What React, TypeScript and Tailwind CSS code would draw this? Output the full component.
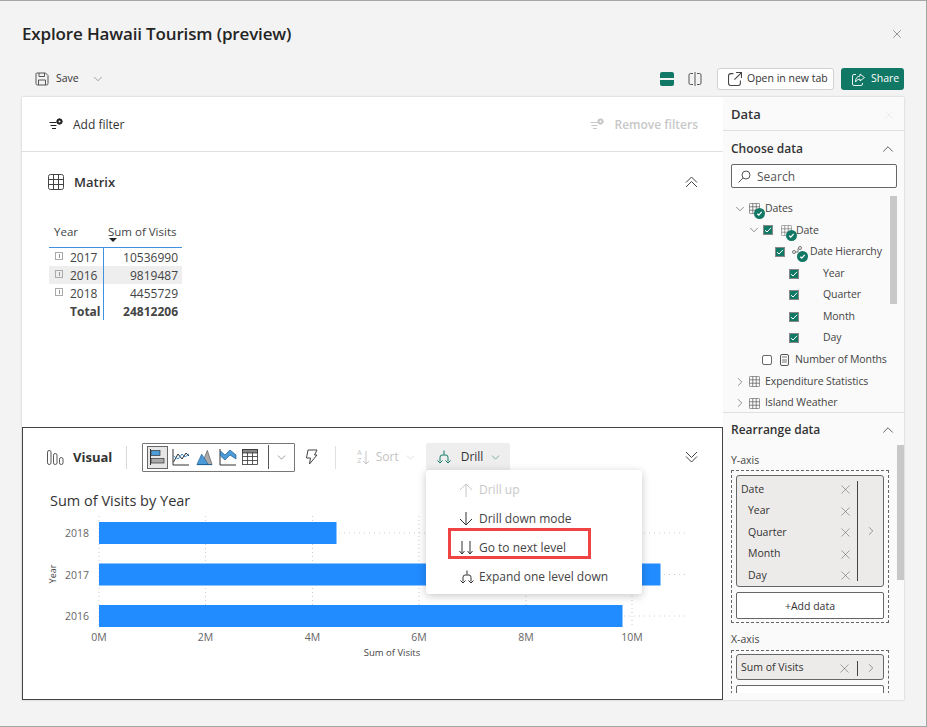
import { ChevronDown, ChevronRight, ChevronUp, X } from "lucide-react";

const FONT = "font-['Open_Sans','Noto_Sans',sans-serif]";

const DrillIcon = ({ color = "#333" }: { color?: string }) => (
  <svg width="16" height="16" viewBox="0 0 16 16" fill="none" stroke={color} strokeWidth="1">
    <path d="M8 1.5v4M4 12.5V8.5q0-2.5 2-2.5h4q2 0 2 2.5v4" />
    <path d="M1.5 11.5 4 14l2.5-2.5M9.5 11.5 12 14l2.5-2.5" />
  </svg>
);

const Arrow = ({ up, color }: { up?: boolean; color: string }) => (
  <svg width="14" height="16" viewBox="0 0 14 16" fill="none" stroke={color} strokeWidth="1">
    {up ? <path d="M7 15V2M1 8l6-6 6 6" /> : <path d="M7 1v13M1 8l6 6 6-6" />}
  </svg>
);

const DoubleArrow = () => (
  <svg width="14" height="16" viewBox="0 0 14 16" fill="none" stroke="#333" strokeWidth="1">
    <path d="M3 1v13M0.5 11 3 14l2.5-3M11 1v13M8.5 11 11 14l2.5-3" />
  </svg>
);

const GridIcon = ({ size = 14, color = "#444" }: { size?: number; color?: string }) => (
  <svg width={size} height={size} viewBox="0 0 16 16" fill="none" stroke={color} strokeWidth="1">
    <rect x="0.5" y="0.5" width="15" height="15" rx="2" />
    <path d="M5.5 0.5v15M10.5 0.5v15M0.5 5.5h15M0.5 10.5h15" />
  </svg>
);

const DoubleChevron = ({ up }: { up?: boolean }) => (
  <svg width="13" height="12" viewBox="0 0 13 12" fill="none" stroke="#444" strokeWidth="1">
    {up ? <path d="M1 6.500 6.500 1 12 6.500M1 11 6.500 5.500 12 11" /> : <path d="M1 1l5.500 5.500L12 1M1 5.500 6.500 11 12 5.500" />}
  </svg>
);

const FilterIcon = ({ color, hole }: { color: string; hole: string }) => (
  <svg width="15" height="13" viewBox="0 0 15 13" fill="none" stroke={color}>
    <path d="M0.500 4.500h7M1.500 7.500h6M3 10.500h4" />
    <circle cx="10.500" cy="3.500" r="2.700" fill={color} />
    <circle cx="10.500" cy="3.500" r="1" fill={hole} stroke="none" />
  </svg>
);

const CheckBadge = () => (
  <span className="absolute -bottom-[5px] -right-[5px] flex h-[11px] w-[11px] items-center justify-center rounded-full bg-[#117865]">
    <svg width="7" height="7" viewBox="0 0 8 8" fill="none" stroke="#fff" strokeWidth="1.5">
      <path d="M1.5 4.2 3.2 5.8 6.5 2.2" />
    </svg>
  </span>
);

const Check = ({ on = true }: { on?: boolean }) =>
  on ? (
    <span className="flex h-[10px] w-[10px] shrink-0 items-center justify-center border border-[#888] bg-[#117865]">
      <svg width="8" height="8" viewBox="0 0 8 8" fill="none" stroke="#fff" strokeWidth="1">
        <path d="M1 4.2 3 6l4-4.2" />
      </svg>
    </span>
  ) : (
    <span className="h-[10px] w-[10px] shrink-0 rounded-[2px] border border-[#666] bg-white" />
  );

const TreeRow = ({ indent, children }: { indent: string; children: React.ReactNode }) => (
  <div className={`flex h-[21.6px] items-center whitespace-nowrap text-[10.5px] tracking-[-0.1px] text-[#444] ${indent}`}>{children}</div>
);

const LevelRow = ({ label }: { label: string }) => (
  <TreeRow indent="pl-[58px]">
    <Check />
    <span className="ml-6">{label}</span>
  </TreeRow>
);

const FieldRow = ({ label, sub }: { label: string; sub?: boolean }) => (
  <div className="flex h-[21.5px] items-center justify-between text-[10.5px] text-[#333]">
    <span className={sub ? "pl-[7px]" : ""}>{label}</span>
    <X size={15} strokeWidth={0.8} color="#555" />
  </div>
);

const TypeIcons = () => (
  <>
    <span className="flex h-[23px] w-[21px] items-center justify-center border border-[#666] bg-[#e6e6e6]">
      <svg width="18" height="18" viewBox="0 0 18 18">
        <path d="M1.5 1v16" stroke="#333" />
        <rect x="2" y="2.5" width="9" height="5" fill="#4a9bd8" stroke="#333" strokeWidth="0.7" />
        <rect x="2" y="10.5" width="13" height="4.5" fill="#aaa" stroke="#333" strokeWidth="0.7" />
      </svg>
    </span>
    <svg className="ml-[4px]" width="18" height="18" viewBox="0 0 18 18" fill="none">
      <path d="M1 1v16h16" stroke="#333" />
      <path d="M1.5 14 6 6l4 5 4-6 3 3" stroke="#333" />
      <path d="M1.5 8 6 11l4-5 3 3 4-3" stroke="#3f8fd0" />
    </svg>
    <svg className="ml-[6px]" width="17" height="18" viewBox="0 0 18 18" fill="none">
      <path d="M6 17 12 2l5 15z" fill="#aaa" stroke="#555" strokeWidth="0.7" />
      <path d="M1 17 6 6l7 11z" fill="#4a9bd8" stroke="#1f5f93" strokeWidth="0.7" />
      <path d="M1 17h16" stroke="#1f5f93" />
    </svg>
    <svg className="ml-[6px]" width="18" height="18" viewBox="0 0 18 18" fill="none">
      <path d="M1 1v16h16" stroke="#333" />
      <path d="M1.5 3 6 7l5-5 6 5v4l-6-4-5 5-4.500-4z" fill="#4a9bd8" stroke="#1f5f93" strokeWidth="0.7" />
    </svg>
    <svg className="ml-[5px]" width="16" height="16" viewBox="0 0 16 16" fill="none" stroke="#333" strokeWidth="0.8">
      <rect x="0.5" y="0.5" width="15" height="15" />
      <rect x="0.5" y="0.5" width="15" height="3.500" fill="#888" />
      <path d="M5.500 3.500v12M10.500 3.500v12M0.500 7.500h15M0.500 11.500h15" />
    </svg>
  </>
);

const Chart = () => {
  const ticks = [
    { label: "0M", x: 99 },
    { label: "2M", x: 205.5 },
    { label: "4M", x: 312.5 },
    { label: "6M", x: 419 },
    { label: "8M", x: 526 },
    { label: "10M", x: 632 },
  ];
  const bars = [
    { year: "2018", y: 522, w: 237.5 },
    { year: "2017", y: 563.500, w: 561.5 },
    { year: "2016", y: 605, w: 523.5 },
  ];
  return (
    <svg width="699" height="150" viewBox="23 510 699 150" className="block" fontFamily="'Open Sans', sans-serif">
      {ticks.map((t) => (
        <g key={t.label}>
          <path d={`M${t.x} 516V627`} stroke="#ccc" strokeDasharray="1 3" />
          <text x={t.x} y={641} fontSize="10.500" fill="#666" textAnchor="middle">
            {t.label}
          </text>
        </g>
      ))}
      {bars.map((b) => (
        <g key={b.year}>
          <path d={`M99 ${b.y + 11}H685`} stroke="#ccc" strokeDasharray="1 4" />
          <rect x={99} y={b.y} width={b.w} height={22} fill="#218cff" />
          <text x={89} y={b.y + 15} fontSize="10.500" fill="#666" textAnchor="end">
            {b.year}
          </text>
        </g>
      ))}
      <text x={392} y={656} fontSize="9.500" fill="#444" textAnchor="middle">
        Sum of Visits
      </text>
      <text transform="translate(56 574) rotate(-90)" fontSize="9" fill="#444" textAnchor="middle">
        Year
      </text>
    </svg>
  );
};

const MatrixRow = ({ year, value, hl }: { year: string; value: string; hl?: boolean }) => (
  <div className={`flex h-[18px] items-center pt-[2px] text-[12px] text-[#444] ${hl ? "bg-[#eeeeee]" : ""}`}>
    <span className="flex w-[54px] items-center pl-[6px]">
      <span className="mr-[7px] -mt-[5px] flex h-[8px] w-[8px] items-center justify-center border border-[#aaa]">
        <span className="h-[4px] w-px bg-[#999]" />
      </span>
      {year}
    </span>
    <span className="flex-1 pr-[4px] text-right">{value}</span>
  </div>
);

export default function App() {
  return (
    <div className={`${FONT} h-[727px] w-[927px] overflow-hidden border border-l-0 border-[#a6a6a6] bg-[#f3f3f3] text-[#242424]`}>
      <div className="flex h-[60px] items-center justify-between pl-[22px] pr-[22px] pt-[6px]">
        <h1 className="text-[17px] font-semibold tracking-[-0.15px]">Explore Hawaii Tourism (preview)</h1>
        <X size={14} strokeWidth={1} color="#555" />
      </div>

      <div className="flex h-[36px] items-center justify-between pl-[35px] pr-[22px]">
        <div className="flex items-center text-[10.500px] text-[#333]">
          <svg width="14" height="14" viewBox="0 0 14 14" fill="none" stroke="#555">
            <path d="M1.500 1h9l2.500 2.500v8a1.500 1.500 0 0 1-1.500 1.500h-9A1.500 1.500 0 0 1 1 11.500V1.500zM4 1v3.500h5.500V1M3.500 13V8h7v5" />
          </svg>
          <span className="ml-[7px]">Save</span>
          <ChevronDown size={14} strokeWidth={1} color="#666" className="ml-[12px]" />
        </div>
        <div className="flex items-center">
          <svg width="14" height="14" viewBox="0 0 14 14">
            <path d="M2 0h10a2 2 0 0 1 2 2v4H0V2a2 2 0 0 1 2-2zM0 8h14v4a2 2 0 0 1-2 2H2a2 2 0 0 1-2-2z" fill="#117865" />
          </svg>
          <svg className="ml-[14px]" width="14" height="14" viewBox="0 0 14 14" fill="none" stroke="#555">
            <path d="M7 0v14M5 1.500H2.500a1.500 1.500 0 0 0-1.500 1.500v8a1.500 1.500 0 0 0 1.500 1.500H5M9 1.500h2.500A1.500 1.500 0 0 1 13 3v8a1.500 1.500 0 0 1-1.500 1.500H9" />
          </svg>
          <button className="ml-[15px] flex h-[22px] w-[117px] items-center rounded-[3px] border border-[#d1d1d1] bg-white pl-[10px] text-[10.500px] text-[#333]">
            <svg width="14" height="14" viewBox="0 0 13 13" fill="none" stroke="#444">
              <path d="M5 1.500H2.500a2 2 0 0 0-2 2v7a2 2 0 0 0 2 2h7a2 2 0 0 0 2-2V8M7.500 0.500h5v5M12 1 6 7" />
            </svg>
            <span className="ml-[5px]">Open in new tab</span>
          </button>
          <button className="ml-[7px] flex h-[22px] w-[63px] items-center rounded-[3px] bg-[#117865] pl-[11px] text-[10.500px] text-white">
            <svg width="13" height="13" viewBox="0 0 13 13" fill="none" stroke="#fff" strokeWidth="0.9">
              <path d="M4 1.500H2a1.500 1.500 0 0 0-1.500 1.500v8A1.500 1.500 0 0 0 2 12.500h7a1.500 1.500 0 0 0 1.500-1.500v-1M8 1l4.500 3.500L8 8V6Q5 6 3.500 9 3.500 3.500 8 3z" />
            </svg>
            <span className="ml-[6px]">Share</span>
          </button>
        </div>
      </div>

      <div className="ml-[22px] flex h-[603px] w-[882px] shadow-[0_0_2px_rgba(0,0,0,0.2)]">
        <div className="flex w-[701px] flex-col bg-white">
          <div className="flex h-[55px] shrink-0 items-center justify-between border-b border-[#e0e0e0] pl-[27px] pr-[25px]">
            <div className="flex items-center text-[12px] text-[#333]">
              <FilterIcon color="#222" hole="#fff" />
              <span className="ml-[9px] mt-[2px]">Add filter</span>
            </div>
            <div className="flex items-center text-[12px] font-semibold text-[#c8c8c8]">
              <FilterIcon color="#c8c8c8" hole="#fff" />
              <span className="ml-[9px] mt-[2px]">Remove filters</span>
            </div>
          </div>

          <div className="h-[275px] shrink-0 pl-[26px] pr-[25px] pt-[21px]">
            <div className="flex h-[18px] items-center justify-between">
              <div className="flex items-center text-[13px] font-semibold text-[#333]">
                <GridIcon size={16} />
                <span className="ml-[10px] mt-[2px]">Matrix</span>
              </div>
              <DoubleChevron up />
            </div>
            <div className="ml-[1px] mt-[30px] w-[133px]">
              <div className="flex h-[27px] items-start border-b border-[#3f92e0] pt-[2px] text-[11.5px] text-[#444]">
                <span className="w-[55px] pl-[5px]">Year</span>
                <span className="relative flex-1 pl-[4px]">
                  Sum of Visits
                  <span className="absolute left-[5px] top-[15px] h-0 w-0 border-x-[4px] border-t-[4px] border-x-transparent border-t-[#222]" />
                </span>
              </div>
              <div className="relative">
                <MatrixRow year="2017" value="10536990" />
                <MatrixRow year="2016" value="9819487" hl />
                <MatrixRow year="2018" value="4455729" />
                <div className="flex h-[18px] items-center pt-[2px] text-[12px] font-bold text-[#444]">
                  <span className="w-[54px] pl-[21px]">Total</span>
                  <span className="flex-1 pr-[4px] text-right">24812206</span>
                </div>
                <div className="absolute bottom-0 left-[54px] top-0 w-px bg-[#3f92e0]" />
              </div>
            </div>
          </div>

          <div className="relative flex-1 border border-[#444]">
            <div className="flex h-[57px] items-center pl-[24px] pr-[24px] pt-[1px]">
              <svg width="17" height="15" viewBox="0 0 17 15" fill="none" stroke="#555">
                <rect x="0.500" y="0.500" width="3.500" height="14" rx="1.700" />
                <rect x="6.500" y="3.500" width="3.500" height="11" rx="1.700" />
                <rect x="12.500" y="7.500" width="3.500" height="7" rx="1.700" />
              </svg>
              <span className="ml-[9px] mt-[1px] text-[13px] font-bold text-[#333]">Visual</span>
              <span className="ml-[14px] h-[23px] w-px bg-[#d8d8d8]" />
              <div className="ml-[15px] flex h-[29px] w-[153px] items-center rounded-[1px] border border-[#777] pl-[4px]">
                <TypeIcons />
                <span className="ml-[10px] h-[24px] w-px bg-[#555]" />
                <ChevronDown size={13} strokeWidth={1} color="#444" className="ml-[6px]" />
              </div>
              <svg className="ml-[10px]" width="13" height="16" viewBox="0 0 13 16" fill="none" stroke="#444">
                <path d="M3 1h9L9.500 6H12L4.500 15 5.500 9H1.500z" />
              </svg>
              <span className="ml-[17px] h-[23px] w-px bg-[#e0e0e0]" />
              <span className="ml-[21px] flex items-center text-[12px] text-[#c4c4c4]">
                <span className="flex flex-col text-[7px] leading-[8px]">
                  <span>A</span>
                  <span>Z</span>
                </span>
                <svg width="8" height="15" viewBox="0 0 8 15" fill="none" stroke="#c4c4c4">
                  <path d="M4 1v13M1 11l3 3 3-3" />
                </svg>
                <span className="ml-[6px]">Sort</span>
                <ChevronDown size={13} strokeWidth={1} className="ml-[5px]" />
              </span>
              <div className="ml-[9px] flex h-[28px] w-[84px] items-center rounded-[2px] bg-[#eeeeee] pl-[10px] text-[12px] text-[#333]">
                <DrillIcon color="#117865" />
                <span className="ml-[9px]">Drill</span>
                <ChevronDown size={13} strokeWidth={1} color="#117865" className="ml-[6px]" />
              </div>
              <span className="ml-auto">
                <DoubleChevron />
              </span>
            </div>
            <div className="pl-[27px] pt-[6px] text-[14.5px] leading-[20px] text-[#333]">Sum of Visits by Year</div>
            <div className="mt-[-1px]">
              <Chart />
            </div>

            <div className="absolute left-[403px] top-[42px] w-[216px] rounded-[3px] bg-white pb-[3px] pt-[5px] text-[12px] text-[#444] shadow-[0_2px_8px_rgba(0,0,0,0.22)]">
              <div className="flex h-[29px] items-center pl-[33px] text-[#c8c8c8]">
                <Arrow up color="#c8c8c8" />
                <span className="ml-[6px]">Drill up</span>
              </div>
              <div className="flex h-[29px] items-center pl-[33px]">
                <Arrow color="#333" />
                <span className="ml-[6px]">Drill down mode</span>
              </div>
              <div className="flex h-[29px] items-center pl-[33px]">
                <DoubleArrow />
                <span className="ml-[6px]">Go to next level</span>
              </div>
              <div className="flex h-[29px] items-center pl-[33px]">
                <DrillIcon />
                <span className="ml-[4px]">Expand one level down</span>
              </div>
              <div className="absolute left-[22px] top-[58px] h-[31px] w-[143px] border-[3px] border-[#f04444]" />
            </div>
          </div>
        </div>

        <div className="flex w-[181px] flex-col bg-[#fafafa]">
          <div className="flex h-[34px] shrink-0 items-center justify-between border-b border-[#e0e0e0] pl-[8px] pr-[8px] pt-[2px] text-[13px] font-semibold text-[#333]">
            Data
            <X size={14} strokeWidth={1} color="#e2e2e2" />
          </div>
          <div className="h-[282px] shrink-0 border-b border-[#e0e0e0] pl-[8px] pr-[7px]">
            <div className="flex h-[33px] items-center justify-between pt-[2px] text-[12px] font-semibold text-[#333]">
              Choose data
              <ChevronUp size={18} strokeWidth={1} color="#333" />
            </div>
            <div className="flex h-[24px] items-center rounded-[2px] border border-[#666] bg-white pl-[6px] text-[12px] text-[#555]">
              <svg width="13" height="13" viewBox="0 0 13 13" fill="none" stroke="#555">
                <circle cx="8" cy="5" r="4" />
                <path d="M5 8 0.500 12.500" />
              </svg>
              <span className="ml-[6px] mt-[2px]">Search</span>
            </div>
            <div className="relative mt-[10px] pr-[8px]">
              <TreeRow indent="pl-[2px]">
                <ChevronDown size={14} strokeWidth={1} color="#444" />
                <span className="relative ml-[2px] mr-[5px]">
                  <GridIcon size={11} color="#555" />
                  <CheckBadge />
                </span>
                Dates
              </TreeRow>
              <TreeRow indent="pl-[16px]">
                <ChevronDown size={14} strokeWidth={1} color="#444" />
                <span className="ml-[2px]">
                  <Check />
                </span>
                <span className="relative ml-[8px] mr-[4px]">
                  <GridIcon size={11} color="#777" />
                  <CheckBadge />
                </span>
                Date
              </TreeRow>
              <TreeRow indent="pl-[44px]">
                <Check />
                <span className="relative ml-[7px] mr-[7px] h-[11px] w-[11px]">
                  <svg width="11" height="11" viewBox="0 0 11 11" fill="none" stroke="#555" strokeWidth="0.8">
                    <circle cx="2" cy="6" r="1.500" />
                    <circle cx="8" cy="2" r="1.500" />
                    <path d="M3.500 6H6V2.500" />
                  </svg>
                  <CheckBadge />
                </span>
                Date Hierarchy
              </TreeRow>
              <LevelRow label="Year" />
              <LevelRow label="Quarter" />
              <LevelRow label="Month" />
              <LevelRow label="Day" />
              <TreeRow indent="pl-[31px]">
                <Check on={false} />
                <svg className="ml-[8px]" width="9" height="12" viewBox="0 0 9 12" fill="none" stroke="#555">
                  <rect x="0.500" y="0.500" width="8" height="11" rx="1.500" />
                  <path d="M2 3h5M2 6h5M2 8h5" strokeWidth="0.8" />
                </svg>
                <span className="ml-[6px]">Number of Months</span>
              </TreeRow>
              <TreeRow indent="pl-[2px]">
                <ChevronRight size={14} strokeWidth={1} color="#444" />
                <span className="ml-[2px] mr-[5px]">
                  <GridIcon size={11} color="#555" />
                </span>
                Expenditure Statistics
              </TreeRow>
              <TreeRow indent="pl-[2px]">
                <ChevronRight size={14} strokeWidth={1} color="#444" />
                <span className="ml-[2px] mr-[5px]">
                  <GridIcon size={11} color="#555" />
                </span>
                Island Weather
              </TreeRow>
              <div className="absolute right-0 top-[-2px] h-[108px] w-[7px] bg-[#c8c8c8]" />
            </div>
          </div>
          <div className="relative min-h-0 flex-1 overflow-hidden pl-[8px] pr-[15px]">
            <div className="flex h-[32px] items-center justify-between pt-[2px] text-[12px] font-semibold text-[#333]">
              Rearrange data
              <ChevronUp size={18} strokeWidth={1} color="#333" className="-mr-[8px]" />
            </div>
            <div className="mt-[8px] text-[10.500px] leading-[14px] text-[#444]">Y-axis</div>
            <div className="mt-[3px] h-[153px] border border-dashed border-[#666] p-[4px]">
              <div className="flex h-[112px] rounded-[3px] border border-[#666] bg-[#edebe9] py-[2px] pl-[4px]">
                <div className="flex-1 pr-[4px] pt-[1px]">
                  <FieldRow label="Date" />
                  <FieldRow label="Year" sub />
                  <FieldRow label="Quarter" sub />
                  <FieldRow label="Month" sub />
                  <FieldRow label="Day" sub />
                </div>
                <div className="my-[3px] w-px bg-[#444]" />
                <div className="flex w-[25px] items-center justify-center">
                  <ChevronRight size={14} strokeWidth={1} color="#555" />
                </div>
              </div>
              <div className="mt-[5px] flex h-[27px] items-center justify-center rounded-[2px] border border-[#666] bg-white pt-[2px] text-[10.500px] font-medium text-[#333]">
                +Add data
              </div>
            </div>
            <div className="mt-[9px] text-[10.500px] leading-[14px] text-[#444]">X-axis</div>
            <div className="mt-[4px] h-[80px] border border-dashed border-[#666] p-[3px_4px]">
              <div className="flex h-[26px] items-center rounded-[3px] border border-[#666] bg-[#edebe9] pl-[4px] pt-[2px] text-[10.500px] text-[#333]">
                <span className="flex-1">Sum of Visits</span>
                <X size={15} strokeWidth={0.8} color="#555" className="mr-[5px]" />
                <span className="h-[15px] w-px bg-[#444]" />
                <span className="flex w-[25px] justify-center">
                  <ChevronRight size={14} strokeWidth={1} color="#555" />
                </span>
              </div>
              <div className="mt-[5px] h-[27px] rounded-[2px] border border-[#666] bg-white" />
            </div>
            <div className="absolute right-0 top-[32px] h-[135px] w-[7px] bg-[#c8c8c8]" />
            <div className="absolute bottom-0 left-0 h-[7px] w-full bg-[#fafafa]" />
          </div>
        </div>
      </div>
    </div>
  );
}
